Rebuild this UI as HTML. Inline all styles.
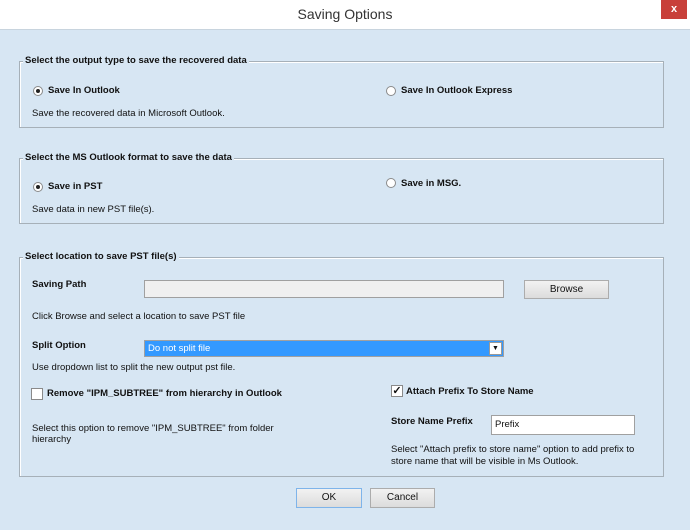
<!DOCTYPE html>
<html><head><meta charset="utf-8"><style>
*{margin:0;padding:0;box-sizing:border-box}
body{width:690px;height:530px;background:#d7e6f3;font-family:"Liberation Sans",sans-serif;font-size:9.5px;color:#111;position:relative;overflow:hidden}
.a{position:absolute;white-space:nowrap}
.title{position:absolute;left:0;top:0;width:690px;height:30px;background:#fff;border-bottom:1px solid #c8d4de}
.title span{position:absolute;left:0;width:690px;text-align:center;top:6px;font-size:14px;color:#333}
.close{position:absolute;left:661px;top:0;width:26px;height:19px;background:#c8403a;color:#fff;font-weight:bold;font-size:11px;text-align:center;line-height:19px}
.grp{position:absolute;left:19px;width:645px;border:1px solid #a6b0b8;box-shadow:1px 1px 0 #fff inset}
.leg{position:absolute;background:#d7e6f3;font-weight:bold;padding:0 2px;left:23px}
b{font-weight:bold}
.rad{position:absolute;width:10px;height:10px;border-radius:50%;border:1px solid #8a8a8a;background:#fff}
.rad.on::after{content:"";position:absolute;left:2px;top:2px;width:4px;height:4px;border-radius:50%;background:#222}
.chk{position:absolute;width:12px;height:12px;border:1px solid #8a8a8a;background:#fff;font-size:11px;line-height:10px;text-align:center;font-weight:bold}
.box{position:absolute;background:#fff;border:1px solid #a0a0a0}
.btn{position:absolute;background:linear-gradient(#f2f2f2,#dcdcdc);border:1px solid #acacac;text-align:center;font-size:10px;line-height:17px}
</style></head><body>
<div class="title"><span>Saving Options</span></div>
<div class="close">x</div>

<div class="grp" style="top:61px;height:67px"></div>
<div class="leg a" style="top:55px">Select the output type to save the recovered data</div>
<div class="rad on" style="left:33px;top:86px"></div>
<div class="a" style="left:48px;top:85px;font-weight:bold">Save In Outlook</div>
<div class="rad" style="left:386px;top:86px"></div>
<div class="a" style="left:401px;top:85px;font-weight:bold">Save In Outlook Express</div>
<div class="a" style="left:32px;top:108px">Save the recovered data in Microsoft Outlook.</div>

<div class="grp" style="top:158px;height:66px"></div>
<div class="leg a" style="top:152px">Select the MS Outlook format to save the data</div>
<div class="rad on" style="left:33px;top:182px"></div>
<div class="a" style="left:48px;top:181px;font-weight:bold">Save in PST</div>
<div class="rad" style="left:386px;top:178px"></div>
<div class="a" style="left:401px;top:178px;font-weight:bold">Save in MSG.</div>
<div class="a" style="left:32px;top:204px">Save data in new PST file(s).</div>

<div class="grp" style="top:257px;height:220px"></div>
<div class="leg a" style="top:251px">Select location to save PST file(s)</div>
<div class="a" style="left:32px;top:279px;font-weight:bold">Saving Path</div>
<div class="box" style="left:144px;top:280px;width:360px;height:18px;background:#f0f0f0"></div>
<div class="btn" style="left:524px;top:280px;width:85px;height:19px">Browse</div>
<div class="a" style="left:32px;top:311px">Click Browse and select a location to save PST file</div>
<div class="a" style="left:32px;top:340px;font-weight:bold">Split Option</div>
<div class="box" style="left:144px;top:340px;width:360px;height:17px;background:#3399ff;color:#fff;padding-left:3px;line-height:15px">Do not split file</div>
<div class="a" style="left:489px;top:342px;width:13px;height:13px;background:#fff;border:1px solid #999;font-size:7px;text-align:center;line-height:12px">▼</div>
<div class="a" style="left:32px;top:362px">Use dropdown list to split the new output pst file.</div>
<div class="chk" style="left:31px;top:388px"></div>
<div class="a" style="left:47px;top:388px;font-weight:bold">Remove "IPM_SUBTREE" from hierarchy in Outlook</div>
<div class="chk" style="left:391px;top:385px">✓</div>
<div class="a" style="left:406px;top:386px;font-weight:bold">Attach Prefix To Store Name</div>
<div class="a" style="left:391px;top:416px;font-weight:bold">Store Name Prefix</div>
<div class="box" style="left:491px;top:415px;width:144px;height:20px;padding-left:3px;line-height:18px">Prefix</div>
<div class="a" style="left:32px;top:423px;line-height:11px">Select this option to remove "IPM_SUBTREE" from folder<br>hierarchy</div>
<div class="a" style="left:391px;top:444px;line-height:12px">Select "Attach prefix to store name" option to add prefix to<br>store name that will be visible in Ms Outlook.</div>

<div class="btn" style="left:296px;top:488px;width:66px;height:20px;border-color:#7eb4ea">OK</div>
<div class="btn" style="left:370px;top:488px;width:65px;height:20px">Cancel</div>
</body></html>
